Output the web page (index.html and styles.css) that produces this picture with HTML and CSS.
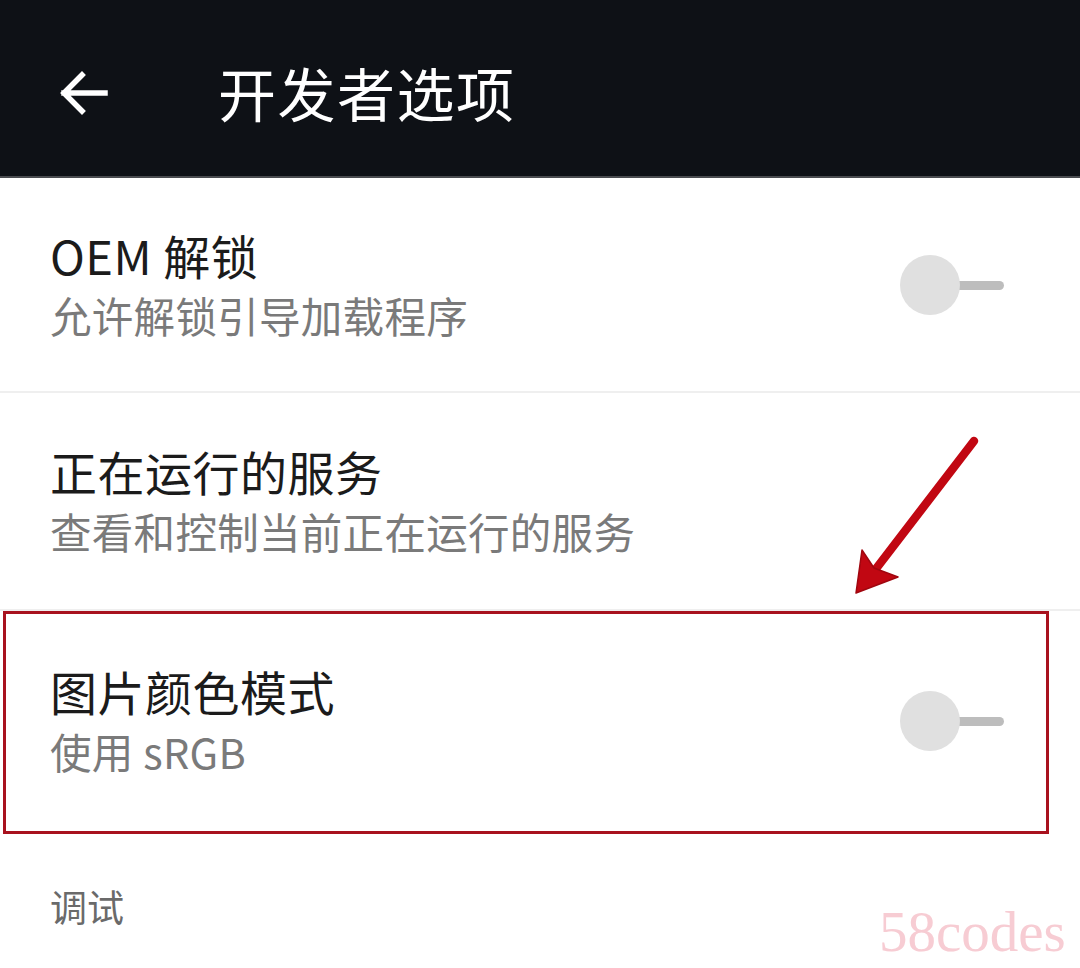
FILE: index.html
```html
<!DOCTYPE html>
<html lang="zh-CN">
<head>
<meta charset="utf-8">
<link rel="stylesheet" href="styles.css">
</head>
<body>
<header class="appbar">
  <svg class="back" width="50" height="50" viewBox="0 0 50 50" aria-hidden="true">
    <path d="M47 25 H6 M24 7 L6 25 L24 43" fill="none" stroke="#fff" stroke-width="5.5" stroke-linecap="square" stroke-linejoin="miter"/>
  </svg>
  <h1 class="appbar-title">开发者选项</h1>
</header>
<main class="list">
  <div class="row row-first">
    <div class="texts">
      <div class="title">OEM 解锁</div>
      <div class="summary">允许解锁引导加载程序</div>
    </div>
    <div class="switch"><span class="track"></span><span class="thumb"></span></div>
  </div>
  <div class="row">
    <div class="texts">
      <div class="title">正在运行的服务</div>
      <div class="summary">查看和控制当前正在运行的服务</div>
    </div>
  </div>
  <div class="row row-last">
    <div class="texts">
      <div class="title">图片颜色模式</div>
      <div class="summary">使用 sRGB</div>
    </div>
    <div class="switch"><span class="track"></span><span class="thumb"></span></div>
  </div>
  <div class="section">调试</div>
</main>
<div class="highlight"></div>
<svg class="pointer" width="1080" height="968" viewBox="0 0 1080 968" aria-hidden="true">
  <line x1="974" y1="441" x2="872" y2="574" stroke="#c10712" stroke-width="8.5" stroke-linecap="round"/>
  <polygon points="856,593 862,550 874,568 898,577" fill="#c10712" stroke="#a0060f" stroke-width="1.5" stroke-linejoin="round"/>
</svg>
<div class="watermark">58codes</div>
</body>
</html>
```
FILE: styles.css
```css
* { box-sizing: border-box; }
html, body { margin: 0; padding: 0; }
body {
  width: 1080px;
  height: 968px;
  overflow: hidden;
  background: #ffffff;
  font-family: "Noto Sans CJK SC", "Noto Sans", sans-serif;
  position: relative;
}
.appbar {
  height: 178px;
  background: #0e1116;
  border-bottom: 2px solid #4a4c50;
  display: flex;
  align-items: center;
  padding-left: 58px;
  padding-top: 10px;
  gap: 110px;
}
.back { display: block; flex: none; }
.appbar-title {
  margin: 0;
  color: #ffffff;
  font-size: 58px;
  font-weight: 400;
  line-height: 1;
  margin-top: -2px;
  letter-spacing: 1.5px;
}
.list { display: flex; flex-direction: column; }
.row {
  height: 218px;
  display: flex;
  align-items: center;
  justify-content: space-between;
  padding: 0 76px 0 50px;
  border-bottom: 2px solid #efefef;
}
.row-first { height: 215px; }
.row-last { border-bottom: none; height: 220px; }
.texts { display: flex; flex-direction: column; gap: 2px; }
.title {
  font-size: 47px;
  line-height: 58px;
  color: #1b1b1b;
  letter-spacing: 0.5px;
}
.summary {
  font-size: 41.5px;
  line-height: 58px;
  color: #7a7a7a;
  letter-spacing: 0.3px;
}
.switch {
  position: relative;
  width: 104px;
  height: 62px;
  flex: none;
}
.track {
  position: absolute;
  right: 0;
  top: 27px;
  width: 52px;
  height: 9px;
  border-radius: 5px;
  background: #bdbdbd;
}
.thumb {
  position: absolute;
  left: 0;
  top: 1px;
  width: 60px;
  height: 60px;
  border-radius: 50%;
  background: #e0e0e0;
}
.section {
  padding: 50px 0 0 50px;
  font-size: 37px;
  line-height: 50px;
  color: #6a6a6a;
}
.highlight {
  position: absolute;
  left: 3px;
  top: 611px;
  width: 1046px;
  height: 223px;
  border: 3px solid #a8121e;
}
.pointer { position: absolute; left: 0; top: 0; }
.watermark {
  position: absolute;
  left: 879px;
  top: 902px;
  font-family: "Liberation Serif", serif;
  font-size: 57px;
  line-height: 60px;
  color: #f7ccd3;
}
```
